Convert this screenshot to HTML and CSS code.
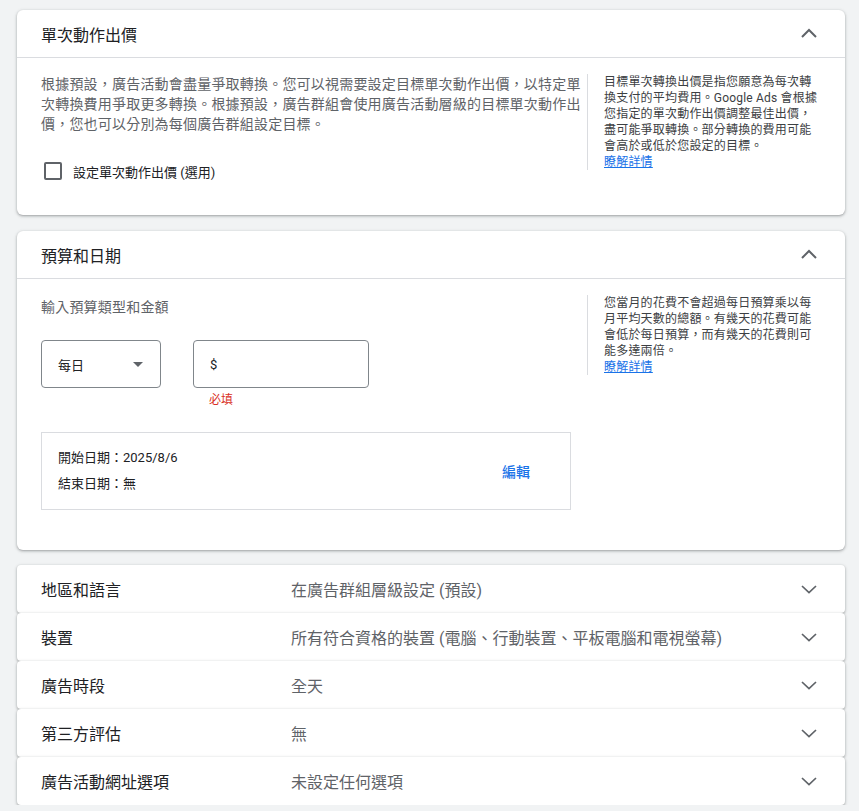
FILE: index.html
```html
<!DOCTYPE html>
<html lang="zh-Hant">
<head>
    <meta charset="UTF-8">
    <meta name="viewport" content="width=device-width, initial-scale=1.0">
    <title>廣告活動設定</title>
    <link rel="stylesheet" href="styles.css">
</head>
<body>
    <div class="page">
        <!-- 單次動作出價 -->
        <section class="card">
            <div class="card-header">
                <h2 class="card-title">單次動作出價</h2>
                <svg class="chevron" width="24" height="24" viewBox="0 0 24 24"><polyline points="5,15 12,8 19,15" fill="none" stroke="#5f6368" stroke-width="2"/></svg>
            </div>
            <div class="card-body">
                <div class="main-col">
                    <p class="desc">根據預設，廣告活動會盡量爭取轉換。您可以視需要設定目標單次動作出價，以特定單次轉換費用爭取更多轉換。根據預設，廣告群組會使用廣告活動層級的目標單次動作出價，您也可以分別為每個廣告群組設定目標。</p>
                    <label class="checkbox-row">
                        <span class="checkbox"></span>
                        <span class="checkbox-label">設定單次動作出價 (選用)</span>
                    </label>
                </div>
                <aside class="help-col">
                    <p>目標單次轉換出價是指您願意為每次轉換支付的平均費用。Google Ads 會根據您指定的單次動作出價調整最佳出價，盡可能爭取轉換。部分轉換的費用可能會高於或低於您設定的目標。</p>
                    <a href="#" class="help-link">瞭解詳情</a>
                </aside>
            </div>
        </section>

        <!-- 預算和日期 -->
        <section class="card">
            <div class="card-header">
                <h2 class="card-title">預算和日期</h2>
                <svg class="chevron" width="24" height="24" viewBox="0 0 24 24"><polyline points="5,15 12,8 19,15" fill="none" stroke="#5f6368" stroke-width="2"/></svg>
            </div>
            <div class="card-body budget-body">
                <div class="main-col">
                    <p class="field-title">輸入預算類型和金額</p>
                    <div class="budget-row">
                        <div class="select">
                            <span>每日</span>
                            <span class="select-arrow"></span>
                        </div>
                        <div class="amount">
                            <div class="amount-input">$</div>
                            <div class="error">必填</div>
                        </div>
                    </div>
                    <div class="dates">
                        <div class="dates-text">
                            <div>開始日期：2025/8/6</div>
                            <div>結束日期：無</div>
                        </div>
                        <button class="text-btn">編輯</button>
                    </div>
                </div>
                <aside class="help-col">
                    <p>您當月的花費不會超過每日預算乘以每月平均天數的總額。有幾天的花費可能會低於每日預算，而有幾天的花費則可能多達兩倍。</p>
                    <a href="#" class="help-link">瞭解詳情</a>
                </aside>
            </div>
        </section>

        <!-- 收合的設定 -->
        <div class="rows">
            <div class="row">
                <div class="row-title">地區和語言</div>
                <div class="row-value">在廣告群組層級設定 (預設)</div>
                <svg class="chevron" width="24" height="24" viewBox="0 0 24 24"><polyline points="5,9 12,15.5 19,9" fill="none" stroke="#5f6368" stroke-width="1.7"/></svg>
            </div>
            <div class="row">
                <div class="row-title">裝置</div>
                <div class="row-value">所有符合資格的裝置 (電腦、行動裝置、平板電腦和電視螢幕)</div>
                <svg class="chevron" width="24" height="24" viewBox="0 0 24 24"><polyline points="5,9 12,15.5 19,9" fill="none" stroke="#5f6368" stroke-width="1.7"/></svg>
            </div>
            <div class="row">
                <div class="row-title">廣告時段</div>
                <div class="row-value">全天</div>
                <svg class="chevron" width="24" height="24" viewBox="0 0 24 24"><polyline points="5,9 12,15.5 19,9" fill="none" stroke="#5f6368" stroke-width="1.7"/></svg>
            </div>
            <div class="row">
                <div class="row-title">第三方評估</div>
                <div class="row-value">無</div>
                <svg class="chevron" width="24" height="24" viewBox="0 0 24 24"><polyline points="5,9 12,15.5 19,9" fill="none" stroke="#5f6368" stroke-width="1.7"/></svg>
            </div>
            <div class="row">
                <div class="row-title">廣告活動網址選項</div>
                <div class="row-value">未設定任何選項</div>
                <svg class="chevron" width="24" height="24" viewBox="0 0 24 24"><polyline points="5,9 12,15.5 19,9" fill="none" stroke="#5f6368" stroke-width="1.7"/></svg>
            </div>
        </div>
    </div>
</body>
</html>
```

FILE: styles.css
```css
body {
    font-family: Roboto, "Noto Sans CJK TC", sans-serif;
    margin: 0;
    padding: 0;
    background-color: #f1f3f4;
    color: #202124;
}

p {
    margin: 0;
}

.page {
    width: 828px;
    padding: 10px 0 0 17px;
}

.card {
    background: #ffffff;
    border-radius: 6px;
    box-shadow: 0 1px 2px 0 rgba(60, 64, 67, 0.3), 0 1px 3px 1px rgba(60, 64, 67, 0.15);
    margin-bottom: 16px;
}

.card-header {
    height: 47px;
    display: flex;
    align-items: center;
    justify-content: space-between;
    padding: 0 24px;
    border-bottom: 1px solid #dadce0;
}

.card-title {
    margin: 0;
    font-size: 16px;
    font-weight: 400;
    color: #202124;
}

.chevron {
    display: block;
    flex-shrink: 0;
}

.card-body {
    display: flex;
    padding: 16px 23px 25px 24px;
}

.main-col {
    flex: 1;
}

.desc {
    font-size: 14px;
    line-height: 20px;
    letter-spacing: 0.2px;
    color: #5f6368;
}

.checkbox-row {
    display: flex;
    align-items: center;
    margin-top: 28px;
    margin-bottom: 10px;
    height: 18px;
}

.checkbox {
    width: 14px;
    height: 14px;
    border: 2px solid #5f6368;
    border-radius: 2px;
    margin-left: 3px;
    margin-right: 11px;
}

.checkbox-label {
    font-size: 13px;
    color: #202124;
}

.help-col {
    width: 218px;
    align-self: flex-start;
    border-left: 1px solid #dadce0;
    padding-left: 16px;
    font-size: 12px;
    line-height: 16px;
    letter-spacing: 0.2px;
    color: #3c4043;
}

.help-link {
    display: block;
    color: #1a73e8;
}

.budget-body {
    padding-bottom: 40px;
}

.field-title {
    font-size: 14px;
    line-height: 24px;
    letter-spacing: 0.2px;
    color: #5f6368;
}

.budget-row {
    display: flex;
    gap: 32px;
    margin-top: 21px;
}

.select {
    width: 120px;
    height: 48px;
    box-sizing: border-box;
    border: 1px solid #80868b;
    border-radius: 4px;
    display: flex;
    align-items: center;
    justify-content: space-between;
    padding: 0 17px 0 16px;
    font-size: 13px;
}

.select-arrow {
    width: 0;
    height: 0;
    border-left: 5px solid transparent;
    border-right: 5px solid transparent;
    border-top: 5px solid #5f6368;
}

.amount-input {
    width: 176px;
    height: 48px;
    box-sizing: border-box;
    border: 1px solid #80868b;
    border-radius: 4px;
    display: flex;
    align-items: center;
    padding-left: 16px;
    font-size: 13px;
}

.error {
    margin-top: 4px;
    padding-left: 16px;
    font-size: 12px;
    line-height: 16px;
    color: #d93025;
}

.dates {
    width: 530px;
    box-sizing: border-box;
    margin-top: 24px;
    border: 1px solid #dadce0;
    display: flex;
    align-items: center;
    justify-content: space-between;
    padding: 12px 32px 12px 16px;
}

.dates-text {
    font-size: 13px;
    line-height: 26px;
    color: #202124;
}

.text-btn {
    font-family: inherit;
    font-size: 14px;
    font-weight: 500;
    color: #1a73e8;
    background: none;
    border: none;
    padding: 0 8px;
    cursor: pointer;
}

.rows {
    margin-top: -1px;
}

.row {
    height: 48px;
    box-sizing: border-box;
    display: flex;
    align-items: center;
    padding: 0 24px;
    background: #ffffff;
    border-radius: 4px;
    box-shadow: 0 1px 2px 0 rgba(60, 64, 67, 0.3), 0 1px 3px 1px rgba(60, 64, 67, 0.15);
}

.row-title {
    width: 250px;
    font-size: 16px;
    color: #202124;
}

.row-value {
    flex: 1;
    font-size: 16px;
    color: #5f6368;
}
```
